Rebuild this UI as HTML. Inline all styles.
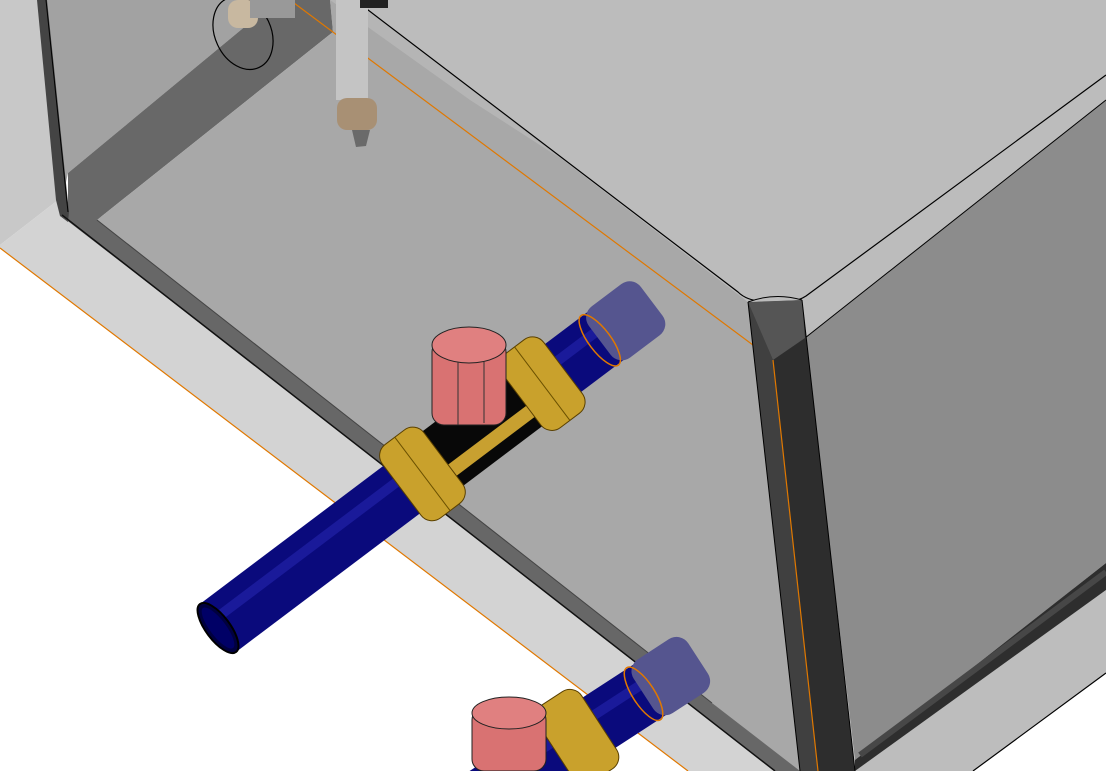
<!DOCTYPE html>
<html><head><meta charset="utf-8"><style>html,body{margin:0;padding:0;background:#fff;overflow:hidden;width:1106px;height:771px}svg{display:block;overflow:hidden}</style></head>
<body>
<svg width="1106" height="771" viewBox="0 0 1106 771" xmlns="http://www.w3.org/2000/svg">
<rect width="1106" height="771" fill="#fff"/>
<polygon points="0,0 40,0 58,200 0,245" fill="#c8c8c8"/>
<polygon points="0,245 58,200 1106,600 1106,673 973,771 688,771 0,248" fill="#d3d3d3"/>
<polygon points="855,771 1106,590 1106,673 973,771" fill="#bdbdbd"/>
<line x1="1106" y1="673" x2="973" y2="771" stroke="#000" stroke-width="1.2"/>
<line x1="0" y1="248" x2="688" y2="771" stroke="#e07800" stroke-width="1.2"/>
<polygon points="290,0 1106,0 1106,100 805,338 748,302" fill="#bcbcbc"/>
<polygon points="40,0 277,0 68,173 60,210" fill="#a2a2a2"/>
<polygon points="277,0 330,0 333,32 97,220 68,220 68,173" fill="#686868"/>
<polygon points="330,0 355,0 748,302 773,360 800,771 790,771 712,703 97,220 333,32" fill="#a8a8a8"/>
<polygon points="330,0 355,0 560,158 470,100" fill="#b5b5b5"/>
<polygon points="37,0 47,0 69,212 68,222 60,216 56,200" fill="#444"/>
<line x1="46" y1="0" x2="68" y2="212" stroke="#000" stroke-width="1"/>
<polygon points="60,215 68,220 97,220 712,703 800,771 775,771 170,300" fill="#676767"/>
<line x1="62" y1="215" x2="775" y2="771" stroke="#111" stroke-width="1.5"/>
<line x1="97" y1="220" x2="712" y2="703" stroke="#444" stroke-width="1"/>
<path d="M355,0 L738,292 Q748,302 770,302 L790,302 Q800,300 806,296 L1106,75" fill="none" stroke="#000" stroke-width="1.2"/>
<line x1="290" y1="0" x2="773" y2="360" stroke="#e07800" stroke-width="1.2"/>
<polygon points="805,338 1106,100 1106,563 855,760" fill="#8c8c8c"/>
<polygon points="855,760 1106,563 1106,590 855,771" fill="#2e2e2e"/>
<line x1="860" y1="755" x2="1106" y2="572" stroke="#474747" stroke-width="6"/>
<line x1="805" y1="338" x2="1106" y2="100" stroke="#000" stroke-width="1"/>
<polygon points="748,302 802,300 855,771 800,771" fill="#2d2d2d"/>
<polygon points="748,302 773,360 818,771 800,771" fill="#404040"/>
<polygon points="748,302 802,300 805,338 773,360" fill="#555"/>
<path d="M748,302 Q775,292 802,300" fill="#bcbcbc" stroke="#000" stroke-width="1"/>
<line x1="748" y1="302" x2="800" y2="771" stroke="#000" stroke-width="1"/>
<line x1="802" y1="300" x2="855" y2="771" stroke="#000" stroke-width="1"/>
<line x1="773" y1="360" x2="818" y2="771" stroke="#e07800" stroke-width="1.2"/>
<ellipse cx="243" cy="33" rx="28" ry="38" transform="rotate(-25 243 33)" fill="none" stroke="#000" stroke-width="1.2"/>
<rect x="228" y="0" width="30" height="28" rx="10" fill="#c8b8a0"/>
<rect x="250" y="0" width="45" height="18" fill="#999"/>
<rect x="336" y="0" width="32" height="100" fill="#c4c4c4"/>
<rect x="360" y="0" width="28" height="8" fill="#222"/>
<rect x="337" y="98" width="40" height="32" rx="10" fill="#a89074"/>
<polygon points="352,130 370,130 366,146 356,147" fill="#6a6a6a"/>
<g transform="translate(218,628) rotate(-37)">
  <rect x="0" y="-30" width="530" height="60" fill="#0a0a7c"/>
  <rect x="0" y="-14" width="530" height="10" fill="#1a1a9a"/>
  <rect x="478" y="-32" width="65" height="64" rx="14" fill="#55558f"/>
  <ellipse cx="0" cy="0" rx="12" ry="30" fill="#000040" stroke="#000" stroke-width="2"/>
  <ellipse cx="0" cy="0" rx="8" ry="25" fill="#000066"/>
  <ellipse cx="478" cy="0" rx="11" ry="31" fill="none" stroke="#e07800" stroke-width="1.5"/>
  <rect x="250" y="-34" width="150" height="68" fill="#080808"/>
  <rect x="265" y="8" width="120" height="14" fill="#c8a030"/>
  <rect x="230" y="-46" width="52" height="92" rx="14" fill="#c9a12c" stroke="#5a4000" stroke-width="1"/>
  <rect x="380" y="-46" width="52" height="92" rx="14" fill="#c9a12c" stroke="#5a4000" stroke-width="1"/>
  <line x1="256" y1="-46" x2="256" y2="46" stroke="#6a5000" stroke-width="1"/>
  <line x1="406" y1="-46" x2="406" y2="46" stroke="#6a5000" stroke-width="1"/>
</g>
<rect x="432" y="340" width="74" height="85" rx="12" fill="#d97272" stroke="#222" stroke-width="1"/>
<ellipse cx="469" cy="345" rx="37" ry="18" fill="#e08080" stroke="#222" stroke-width="1"/>
<line x1="458" y1="362" x2="458" y2="425" stroke="#333" stroke-width="1"/>
<line x1="484" y1="362" x2="484" y2="423" stroke="#333" stroke-width="1"/>
<g transform="translate(480,800) rotate(-33)">
  <rect x="0" y="-30" width="230" height="60" fill="#0a0a7c"/>
  <rect x="0" y="-14" width="230" height="10" fill="#1a1a9a"/>
  <rect x="195" y="-32" width="65" height="64" rx="14" fill="#55558f"/>
  <ellipse cx="195" cy="0" rx="11" ry="31" fill="none" stroke="#e07800" stroke-width="1.5"/>
  <rect x="90" y="-46" width="52" height="92" rx="14" fill="#c9a12c" stroke="#5a4000" stroke-width="1"/>
</g>
<rect x="472" y="708" width="74" height="63" rx="12" fill="#d97272" stroke="#222" stroke-width="1"/>
<ellipse cx="509" cy="713" rx="37" ry="16" fill="#e08080" stroke="#222" stroke-width="1"/>
</svg>
</body></html>
